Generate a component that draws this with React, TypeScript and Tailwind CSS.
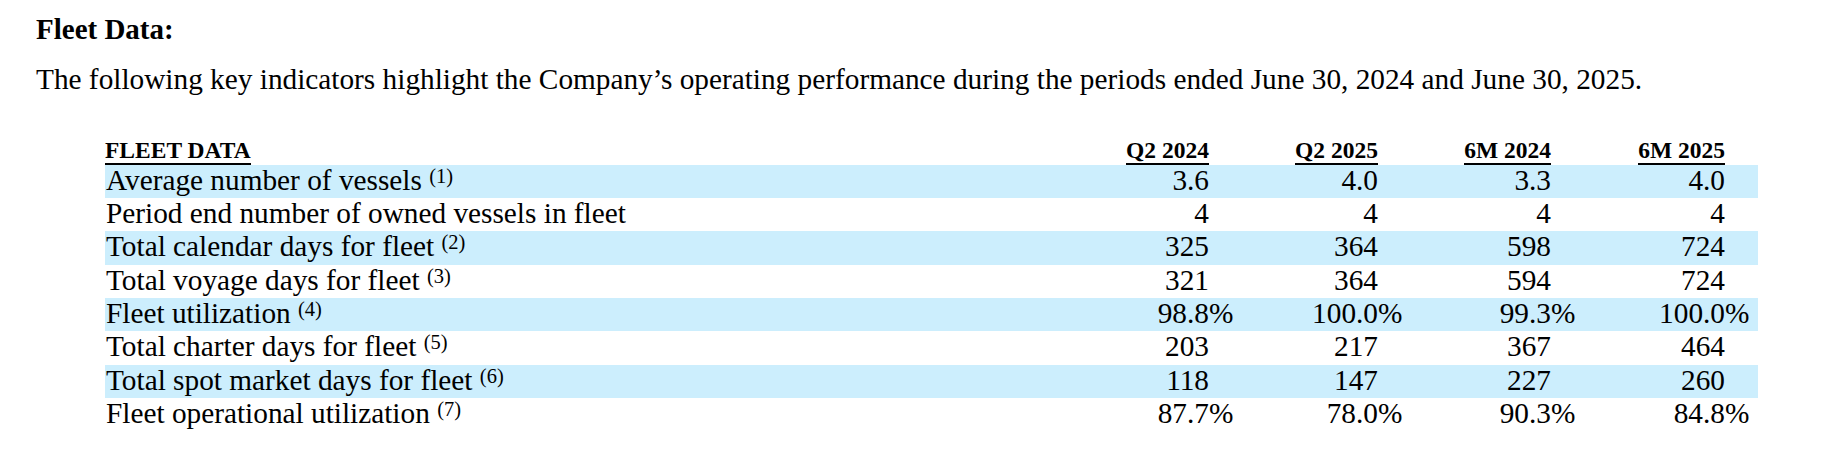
import React from "react";

type Row = {
  label: string;
  note?: string;
  vals: string[];
  pct?: boolean;
  hl?: boolean;
};

const rows: Row[] = [
  { label: "Average number of vessels", note: "(1)", vals: ["3.6", "4.0", "3.3", "4.0"], hl: true },
  { label: "Period end number of owned vessels in fleet", vals: ["4", "4", "4", "4"] },
  { label: "Total calendar days for fleet", note: "(2)", vals: ["325", "364", "598", "724"], hl: true },
  { label: "Total voyage days for fleet", note: "(3)", vals: ["321", "364", "594", "724"] },
  { label: "Fleet utilization", note: "(4)", vals: ["98.8", "100.0", "99.3", "100.0"], pct: true, hl: true },
  { label: "Total charter days for fleet", note: "(5)", vals: ["203", "217", "367", "464"] },
  { label: "Total spot market days for fleet", note: "(6)", vals: ["118", "147", "227", "260"], hl: true },
  { label: "Fleet operational utilization", note: "(7)", vals: ["87.7", "78.0", "90.3", "84.8"], pct: true },
];

const headers = ["Q2 2024", "Q2 2025", "6M 2024", "6M 2025"];

const GRID = "grid grid-cols-[1fr_100px_24px_145px_24px_149px_24px_150px_24px_9px]";

export default function App() {
  return (
    <div className="w-[1832px] h-[452px] bg-white text-black font-['Liberation_Serif','Times_New_Roman',serif] pt-[13px] pl-[36px]">
      <h2 className="text-[29px] font-bold leading-[33.3px]">Fleet Data:</h2>
      <p className="mt-[17px] text-[29.3px] leading-[33.3px] whitespace-nowrap">
        The following key indicators highlight the Company’s operating performance during the periods ended June 30, 2024 and June 30, 2025.
      </p>

      <div className="mt-[41px] ml-[69px] w-[1653px]">
        <div className={`${GRID} h-[27px] items-end text-[23.5px] font-bold leading-[25px]`}>
          <div>
            <span className="inline-block border-b-2 border-black">FLEET DATA</span>
          </div>
          {headers.map((h) => (
            <React.Fragment key={h}>
              <div className="flex justify-end">
                <span className="inline-block whitespace-nowrap border-b-2 border-black">{h}</span>
              </div>
              <div />
            </React.Fragment>
          ))}
          <div />
        </div>

        {rows.map((r) => (
          <div
            key={r.label}
            className={`${GRID} h-[33.33px] text-[29.3px] leading-[31px] ${r.hl ? "bg-[#cceefd]" : "bg-white"}`}
          >
            <div className="whitespace-nowrap pl-[1px]">
              {r.label}
              {r.note && (
                <>
                  {" "}
                  <span className="text-[20.5px] leading-none align-[7px]">{r.note}</span>
                </>
              )}
            </div>
            {r.vals.map((v, i) => (
              <React.Fragment key={i}>
                <div className="text-right whitespace-nowrap">{v}</div>
                <div className="text-left">{r.pct ? "%" : ""}</div>
              </React.Fragment>
            ))}
            <div />
          </div>
        ))}
      </div>
    </div>
  );
}
